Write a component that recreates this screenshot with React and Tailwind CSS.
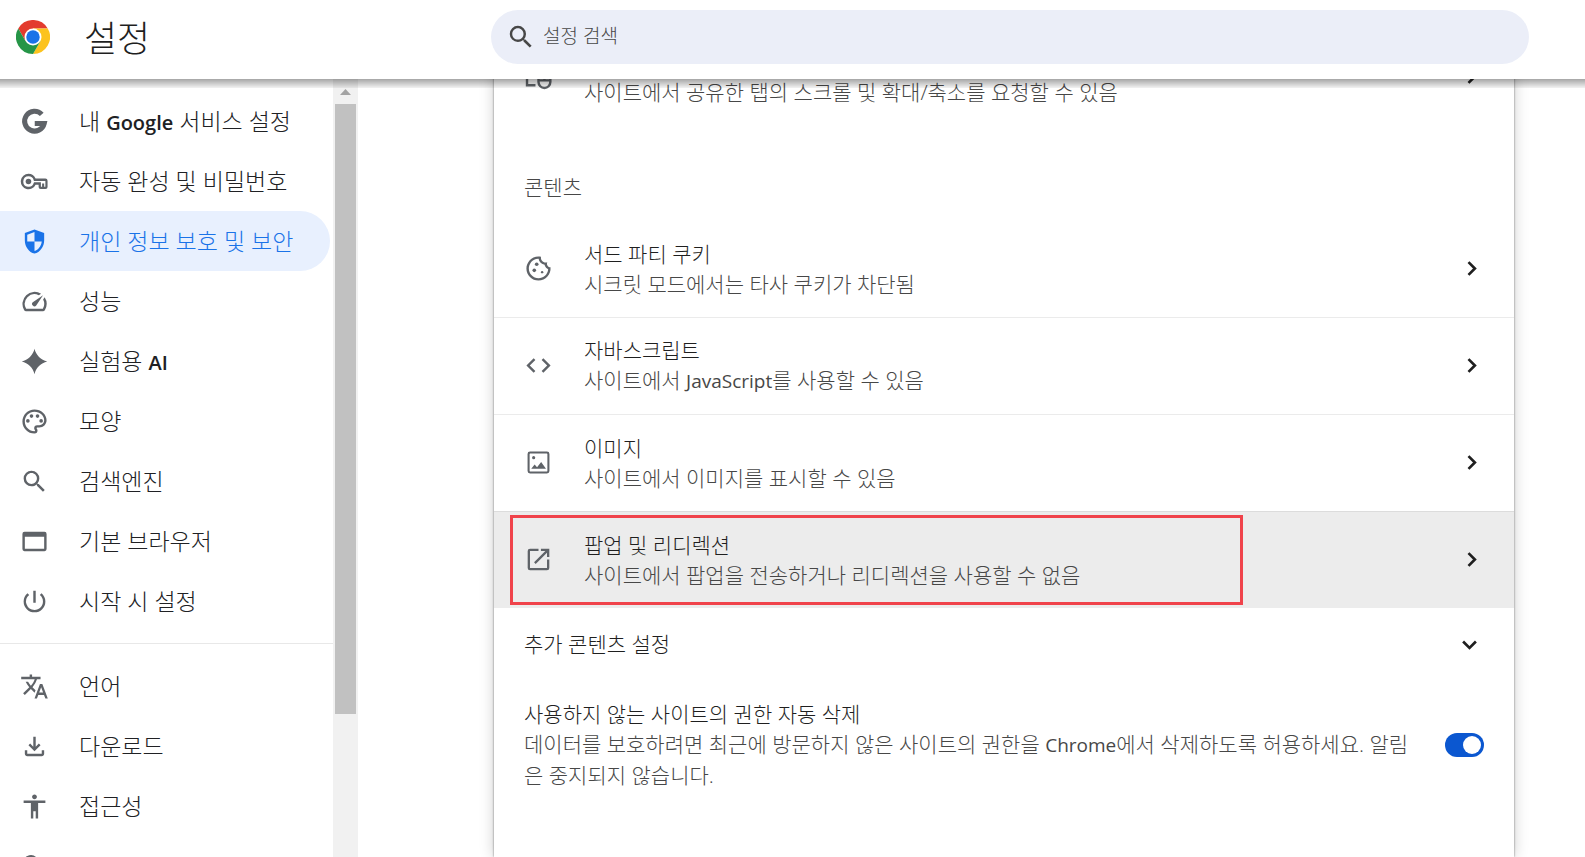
import React, { useState } from 'react';
import {
    MdAccessibility,
    MdCode,
    MdOutlineCookie,
    MdOutlineFileDownload,
    MdOutlinePalette,
    MdPowerSettingsNew,
    MdSearch,
    MdTranslate,
} from 'react-icons/md';

const Icon = ({ children }) => (
    <svg viewBox="0 0 24 24" width="29" height="29" fill="currentColor" aria-hidden="true">
        {children}
    </svg>
);

const GoogleIcon = () => (
    <Icon>
        <path d="M18 6.1A8.2 8.2 0 1 0 20 13.7H12.2" fill="none" stroke="currentColor" strokeWidth="4.2" />
    </Icon>
);

const KeyIcon = () => (
    <Icon>
        <path
            fillRule="evenodd"
            d="M7 5.6a6.4 6.4 0 0 1 5.9 3.9H21a1.8 1.8 0 0 1 1.8 1.8v5.2a1.7 1.7 0 0 1-1.7 1.7h-4a1.7 1.7 0 0 1-1.7-1.7v-1.9h-2.5A6.4 6.4 0 1 1 7 5.6zm0 2A4.4 4.4 0 1 0 11.4 13.1l.3-.5h5.6v3.7h1v-2.6h1.7v2.6h1v-4.8h-9.5l-.2-.8A4.4 4.4 0 0 0 7 7.6z"
        />
        <circle cx="7" cy="12" r="2.3" />
    </Icon>
);

const ShieldIcon = () => (
    <Icon>
        <path
            fillRule="evenodd"
            d="M12 2 4 5v6.1c0 5 3.4 9.8 8 10.9 4.6-1.1 8-5.9 8-10.9V5zM12 4.1V12H6V6.4zM12 12h6c-.5 3.7-2.8 6.9-6 7.9z"
        />
    </Icon>
);

const SpeedIcon = () => (
    <Icon>
        <path d="m20.38 8.57-1.23 1.85a8 8 0 0 1-.22 7.58H5.07A8 8 0 0 1 15.58 6.85l1.85-1.23A10 10 0 0 0 3.35 19a2 2 0 0 0 1.72 1h13.85a2 2 0 0 0 1.74-1 10 10 0 0 0-.27-10.44zm-9.79 6.84a2 2 0 0 0 2.83 0l5.66-8.49-8.49 5.66a2 2 0 0 0 0 2.83z" />
    </Icon>
);

const SparkIcon = () => (
    <Icon>
        <path d="M12 1.5C13 6.5 17.5 11 22.5 12 17.5 13 13 17.5 12 22.5 11 17.5 6.5 13 1.5 12 6.5 11 11 6.5 12 1.5z" />
    </Icon>
);

const BrowserIcon = () => (
    <Icon>
        <path
            fillRule="evenodd"
            d="M3.7 4h16.6A1.7 1.7 0 0 1 22 5.7v12.6a1.7 1.7 0 0 1-1.7 1.7H3.7A1.7 1.7 0 0 1 2 18.3V5.7A1.7 1.7 0 0 1 3.7 4zM4 8v10h16V8z"
        />
    </Icon>
);

const WrenchIcon = () => (
    <Icon>
        <path
            d="M6.5 4.2a5.8 5.8 0 0 1 7.8 7.6l6.2 6.3-3 3-6.3-6.2A5.8 5.8 0 0 1 3.6 7.1l3.4 3.4 2.9-2.9z"
            fill="none"
            stroke="currentColor"
            strokeWidth="2"
        />
    </Icon>
);

const ImageIcon = () => (
    <Icon>
        <rect x="3.8" y="3.8" width="16.4" height="16.4" rx="1.2" fill="none" stroke="currentColor" strokeWidth="1.7" />
        <circle cx="8" cy="8" r="1.3" />
        <path d="M6 17.2 8.8 13.7l2 2.3 3.4-4.5 4 5.7z" />
    </Icon>
);

const PopupIcon = () => (
    <Icon>
        <g fill="none" stroke="currentColor" strokeWidth="1.9">
            <path d="M12 4H5a1 1 0 0 0-1 1v14a1 1 0 0 0 1 1h14a1 1 0 0 0 1-1v-7" />
            <path d="M14 4h6v6M20 4 9 15" />
        </g>
    </Icon>
);

const TabScrollIcon = () => (
    <Icon>
        <g fill="none" stroke="currentColor" strokeWidth="2">
            <path d="M20 8V4H2.5v15.2h7" />
            <path d="M12 15.2V13a4.9 4.9 0 0 1 9.8 0v3.600a4.900 4.900 0 0 1-9.800 0zM12 15.200h9.800M16.900 9v6" />
        </g>
    </Icon>
);

const ChevronRight = () => (
    <svg viewBox="0 0 24 24" width="29" height="29" fill="none" stroke="currentColor" strokeWidth="2.2" aria-hidden="true">
        <path d="M9.5 6.7 14.8 12 9.5 17.3" />
    </svg>
);

const ChevronDown = () => (
    <svg viewBox="0 0 24 24" width="29" height="29" fill="none" stroke="currentColor" strokeWidth="2.2" aria-hidden="true">
        <path d="M6.7 9.5 12 14.8 17.3 9.5" />
    </svg>
);

const ChromeLogo = () => (
    <svg viewBox="0 0 48 48" width="34" height="34" aria-hidden="true">
        <path d="M24 12h20.8A24 24 0 0 0 3.2 12l10.4 18L24 24z" fill="#e33b2e" />
        <path d="M34.4 30 24 48A24 24 0 0 0 44.8 12H24z" fill="#fcc31e" />
        <path d="M13.6 30 3.2 12A24 24 0 0 0 24 48l10.4-18L24 24z" fill="#269547" />
        <circle cx="24" cy="24" r="12" fill="#fff" />
        <circle cx="24" cy="24" r="9.5" fill="#1a73e8" />
    </svg>
);

const mainNav = [
    { icon: <GoogleIcon />, label: <>내 <span className="text-xl font-semibold">Google</span> 서비스 설정</> },
    { icon: <KeyIcon />, label: '자동 완성 및 비밀번호' },
    { icon: <ShieldIcon />, label: '개인 정보 보호 및 보안', active: true },
    { icon: <SpeedIcon />, label: '성능' },
    { icon: <SparkIcon />, label: <>실험용 <span className="text-xl font-semibold">AI</span></> },
    { icon: <MdOutlinePalette size={29} />, label: '모양' },
    { icon: <MdSearch size={29} />, label: '검색엔진' },
    { icon: <BrowserIcon />, label: '기본 브라우저' },
    { icon: <MdPowerSettingsNew size={29} />, label: '시작 시 설정' },
];

const moreNav = [
    { icon: <MdTranslate size={29} />, label: '언어' },
    { icon: <MdOutlineFileDownload size={29} />, label: '다운로드' },
    { icon: <MdAccessibility size={29} />, label: '접근성' },
    { icon: <WrenchIcon /> },
];

const contentRows = [
    { icon: <MdOutlineCookie size={29} />, title: '서드 파티 쿠키', sub: '시크릿 모드에서는 타사 쿠키가 차단됨' },
    {
        icon: <MdCode size={29} />,
        title: '자바스크립트',
        sub: <>사이트에서 <span className="text-[19px] font-normal">JavaScript</span>를 사용할 수 있음</>,
    },
    { icon: <ImageIcon />, title: '이미지', sub: '사이트에서 이미지를 표시할 수 있음' },
    {
        icon: <PopupIcon />,
        title: '팝업 및 리디렉션',
        sub: '사이트에서 팝업을 전송하거나 리디렉션을 사용할 수 없음',
        highlighted: true,
    },
];

const NavItem = ({ icon, label, active }) => (
    <a
        href="#"
        className={`mr-[3px] flex h-15 shrink-0 items-center gap-[30px] rounded-r-full pl-5 text-[23px] whitespace-nowrap ${
            active ? 'bg-[#e8f0fe] text-[#1a73e8]' : 'text-[#202124]'
        }`}
    >
        <span className={active ? 'text-[#1a73e8]' : 'text-[#5f6368]'}>{icon}</span>
        {label && <span>{label}</span>}
    </a>
);

const SettingRow = ({ icon, title, sub, divided, highlighted }) => (
    <a
        href="#"
        className={`relative flex shrink-0 items-center pr-7 pb-px pl-[30px] leading-[30px] ${divided ? 'h-[97px] border-t' : 'h-24'} ${
            highlighted ? 'border-[#dcdcdc] bg-[#ececec]' : 'border-[#ebebeb]'
        }`}
    >
        <span className="mr-[31px] text-[#5f6368]">{icon}</span>
        <span className="flex-1">
            <span className="block h-[30px] text-[#1f1f1f]">{title}</span>
            <span className="block text-[#474747]">{sub}</span>
        </span>
        <ChevronRight />
        {highlighted && <span className="absolute inset-y-[3px] right-[271px] left-4 border-3 border-[#f0434b]" />}
    </a>
);

const App = () => {
    const [autoRemove, setAutoRemove] = useState(true);

    return (
        <div className="flex h-screen flex-col overflow-hidden bg-white font-['Open_Sans','Noto_Sans_CJK_KR',sans-serif] font-light text-[#1f1f1f]">
            <header className="relative z-10 flex h-[79px] shrink-0 items-start bg-white pr-14">
                <div className="flex h-[74px] w-[491px] shrink-0 items-center gap-[34px] pl-4">
                    <ChromeLogo />
                    <h1 className="pt-[3px] text-4xl">설정</h1>
                </div>
                <label className="mt-[10px] flex h-[54px] flex-1 items-center gap-[7px] rounded-full bg-[#ebeef8] pl-[15px] text-[#474747]">
                    <MdSearch size={30} />
                    <input
                        type="text"
                        aria-label="설정 검색"
                        placeholder="설정 검색"
                        className="flex-1 bg-transparent pb-[2px] text-[19px] outline-none placeholder:text-[#474747]"
                    />
                </label>
                <div className="pointer-events-none absolute inset-x-0 top-full h-[9px] bg-linear-to-b from-black/35 to-black/5" />
            </header>

            <div className="flex min-h-0 flex-1">
                <aside className="flex w-[358px] shrink-0">
                    <nav className="flex flex-1 flex-col overflow-hidden pt-3">
                        {mainNav.map((item, i) => (
                            <NavItem key={i} {...item} />
                        ))}
                        <hr className="my-3 shrink-0 border-[#e8e8e8]" />
                        {moreNav.map((item, i) => (
                            <NavItem key={i} {...item} />
                        ))}
                    </nav>
                    <div className="flex w-[25px] flex-col items-center bg-[#f1f1f1]">
                        <svg viewBox="0 0 25 25" width="25" height="25" aria-hidden="true">
                            <path d="M12.5 10 18 16H7z" fill="#a3a3a3" />
                        </svg>
                        <div className="h-[610px] w-[21px] bg-[#c1c1c1]" />
                    </div>
                </aside>

                <main className="flex flex-1 flex-col overflow-hidden pr-[71px] pl-34">
                    <section className="-mt-[50px] flex flex-1 flex-col bg-white text-[21px] shadow-[0_0_2px_rgba(0,0,0,0.5),0_0_14px_rgba(0,0,0,0.2)]">
                        <SettingRow icon={<TabScrollIcon />} sub="사이트에서 공유한 탭의 스크롤 및 확대/축소를 요청할 수 있음" />
                        <h2 className="flex h-24 shrink-0 items-end px-[30px] pb-[19px] leading-[30px] text-[#474747]">콘텐츠</h2>
                        {contentRows.map((row, i) => (
                            <SettingRow key={i} divided={i > 0} {...row} />
                        ))}
                        <button type="button" className="flex h-[73px] shrink-0 items-center justify-between px-[30px]">
                            추가 콘텐츠 설정
                            <ChevronDown />
                        </button>
                        <div className="flex items-center gap-[30px] px-[30px] py-[18px] leading-[30px]">
                            <label htmlFor="auto-remove" className="flex-1 break-all">
                                <span className="block">사용하지 않는 사이트의 권한 자동 삭제</span>
                                <span className="block text-[#474747]">
                                    데이터를 보호하려면 최근에 방문하지 않은 사이트의 권한을 <span className="text-[19px] font-normal">Chrome</span>에서 삭제하도록 허용하세요. 알림은 중지되지 않습니다.
                                </span>
                            </label>
                            <input
                                id="auto-remove"
                                type="checkbox"
                                role="switch"
                                checked={autoRemove}
                                onChange={(e) => setAutoRemove(e.target.checked)}
                                className="flex h-6 w-[39px] shrink-0 appearance-none items-center rounded-full bg-gray-400 px-[3px] before:size-[18px] before:rounded-full before:bg-white checked:justify-end checked:bg-[#0b57d0]"
                            />
                        </div>
                    </section>
                </main>
            </div>
        </div>
    );
};

export default App;
